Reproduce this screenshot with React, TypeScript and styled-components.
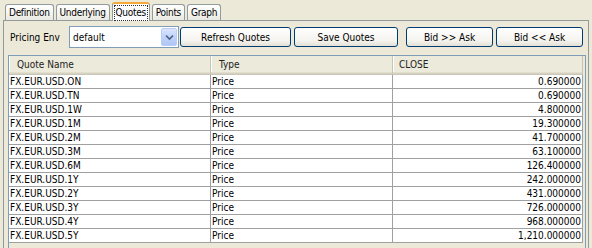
import styled, { createGlobalStyle } from "styled-components";

const GlobalStyle = createGlobalStyle`
  html, body {
    margin: 0;
    padding: 0;
    background: #ece9d8;
  }
  body {
    font: 10px "DejaVu Sans Condensed", "DejaVu Sans", sans-serif;
    color: #000;
  }
`;

const tabs = ["Definition", "Underlying", "Quotes", "Points", "Graph"];

const quotes: [string, string, string][] = [
  ["FX.EUR.USD.ON", "Price", "0.690000"],
  ["FX.EUR.USD.TN", "Price", "0.690000"],
  ["FX.EUR.USD.1W", "Price", "4.800000"],
  ["FX.EUR.USD.1M", "Price", "19.300000"],
  ["FX.EUR.USD.2M", "Price", "41.700000"],
  ["FX.EUR.USD.3M", "Price", "63.100000"],
  ["FX.EUR.USD.6M", "Price", "126.400000"],
  ["FX.EUR.USD.1Y", "Price", "242.000000"],
  ["FX.EUR.USD.2Y", "Price", "431.000000"],
  ["FX.EUR.USD.3Y", "Price", "726.000000"],
  ["FX.EUR.USD.4Y", "Price", "968.000000"],
  ["FX.EUR.USD.5Y", "Price", "1,210.000000"],
];

export default function App() {
  return (
    <>
      <GlobalStyle />
      <Window>
        <TabStrip>
          {tabs.map((t) => (
            <Tab key={t} $active={t === "Quotes"}>
              {t === "Quotes" ? <FocusRing>{t}</FocusRing> : t}
            </Tab>
          ))}
        </TabStrip>
        <Panel>
          <Toolbar>
            <FieldLabel>Pricing Env</FieldLabel>
            <Combo>
              <ComboText>default</ComboText>
              <ComboArrow>
                <svg width="9" height="7" viewBox="0 0 9 7">
                  <path
                    d="M1 1.5 L4.5 5 L8 1.5"
                    fill="none"
                    stroke="#4d6185"
                    strokeWidth="1.6"
                  />
                </svg>
              </ComboArrow>
            </Combo>
            <Button $w={111} $gap={1}>Refresh Quotes</Button>
            <Button $w={104} $gap={3}>Save Quotes</Button>
            <Button $w={87} $gap={8}>Bid &gt;&gt; Ask</Button>
            <Button $w={87} $gap={3}>Bid &lt;&lt; Ask</Button>
          </Toolbar>
          <ScrollPane>
            <Table>
              <HeadCell>Quote Name</HeadCell>
              <HeadCell>Type</HeadCell>
              <HeadCell $pad={6}>CLOSE</HeadCell>
              {quotes.map(([name, type, close]) => (
                <Row key={name}>
                  <Cell>{name}</Cell>
                  <Cell>{type}</Cell>
                  <Cell $right>{close}</Cell>
                </Row>
              ))}
            </Table>
          </ScrollPane>
        </Panel>
      </Window>
    </>
  );
}

const Window = styled.div`
  width: 592px;
  height: 248px;
  overflow: hidden;
  box-sizing: border-box;
  padding: 2px 3px 0 3px;
`;

const TabStrip = styled.div`
  display: flex;
  align-items: flex-end;
  height: 18px;
  padding-left: 2px;
  gap: 2px;
  position: relative;
  z-index: 1;
`;

const Tab = styled.div<{ $active?: boolean }>`
  box-sizing: border-box;
  height: ${(p) => (p.$active ? 19 : 16)}px;
  margin-bottom: ${(p) => (p.$active ? -1 : 0)}px;
  padding: ${(p) => (p.$active ? "0 1px" : "0 3px")};
  display: flex;
  align-items: center;
  border: 1px solid #919b9c;
  border-bottom: none;
  border-top: ${(p) => (p.$active ? "2px solid #f5a93a" : "1px solid #919b9c")};
  border-radius: 3px 3px 0 0;
  background: ${(p) =>
    p.$active ? "#fcfcfe" : "linear-gradient(#ffffff, #f3f3ef 60%, #e9e8e1)"};
  letter-spacing: -0.3px;
  white-space: nowrap;
`;

const FocusRing = styled.span`
  display: block;
  padding: 1px 1px 2px;
  border: 1px dotted #333;
`;

const Panel = styled.div`
  box-sizing: border-box;
  height: 240px;
  border: 1px solid #919b9c;
  padding: 5px 2px 0 4px;
`;

const Toolbar = styled.div`
  display: flex;
  align-items: center;
  height: 22px;
`;

const FieldLabel = styled.div`
  flex: 0 0 61px;
  box-sizing: border-box;
  padding-left: 2px;
  white-space: nowrap;
`;

const Combo = styled.div`
  box-sizing: border-box;
  width: 110px;
  height: 22px;
  border: 1px solid #7f9db9;
  background: #fff;
  display: flex;
  align-items: stretch;
  padding: 1px;
`;

const ComboText = styled.div`
  flex: 1;
  display: flex;
  align-items: center;
  padding-left: 2px;
`;

const ComboArrow = styled.div`
  width: 16px;
  display: flex;
  align-items: center;
  justify-content: center;
  border: 1px solid #bacdf6;
  border-radius: 2px;
  box-sizing: border-box;
  background: linear-gradient(#dbe6fd, #c1d3fb 50%, #b0c6f5);
`;

const Button = styled.div<{ $w: number; $gap: number }>`
  box-sizing: border-box;
  width: ${(p) => p.$w}px;
  height: 20px;
  margin-left: ${(p) => p.$gap}px;
  border: 1px solid #003c74;
  border-radius: 3px;
  background: linear-gradient(#ffffff, #f4f3ee 70%, #e3e0d6);
  display: flex;
  align-items: center;
  justify-content: center;
  white-space: nowrap;
`;

const ScrollPane = styled.div`
  box-sizing: border-box;
  margin-top: 7px;
  width: 578px;
  height: 200px;
  border: 1px solid #7f9db9;
  background: #ece9d8;
  overflow: hidden;
`;

const Table = styled.div`
  display: grid;
  grid-template-columns: 202px 182px 190px;
`;

const HeadCell = styled.div<{ $pad?: number }>`
  box-sizing: border-box;
  height: 19px;
  display: flex;
  align-items: center;
  padding-left: ${(p) => p.$pad ?? 8}px;
  padding-bottom: 2px;
  background: #ebeadb;
  color: #222;
  border-right: 1px solid #c7c5b2;
  box-shadow: inset 0 -1px #cbc7b8, inset 0 -2px #d6d2c2, inset 0 -3px #e2decd,
    inset 1px 0 #fff;
`;

const Row = styled.div`
  display: contents;
`;

const Cell = styled.div<{ $right?: boolean }>`
  box-sizing: border-box;
  height: 14px;
  display: flex;
  align-items: center;
  justify-content: ${(p) => (p.$right ? "flex-end" : "flex-start")};
  padding: 0 1px;
  background: #fff;
  border-right: 1px solid #a0a0a0;
  border-bottom: 1px solid #a0a0a0;
  white-space: nowrap;
`;
